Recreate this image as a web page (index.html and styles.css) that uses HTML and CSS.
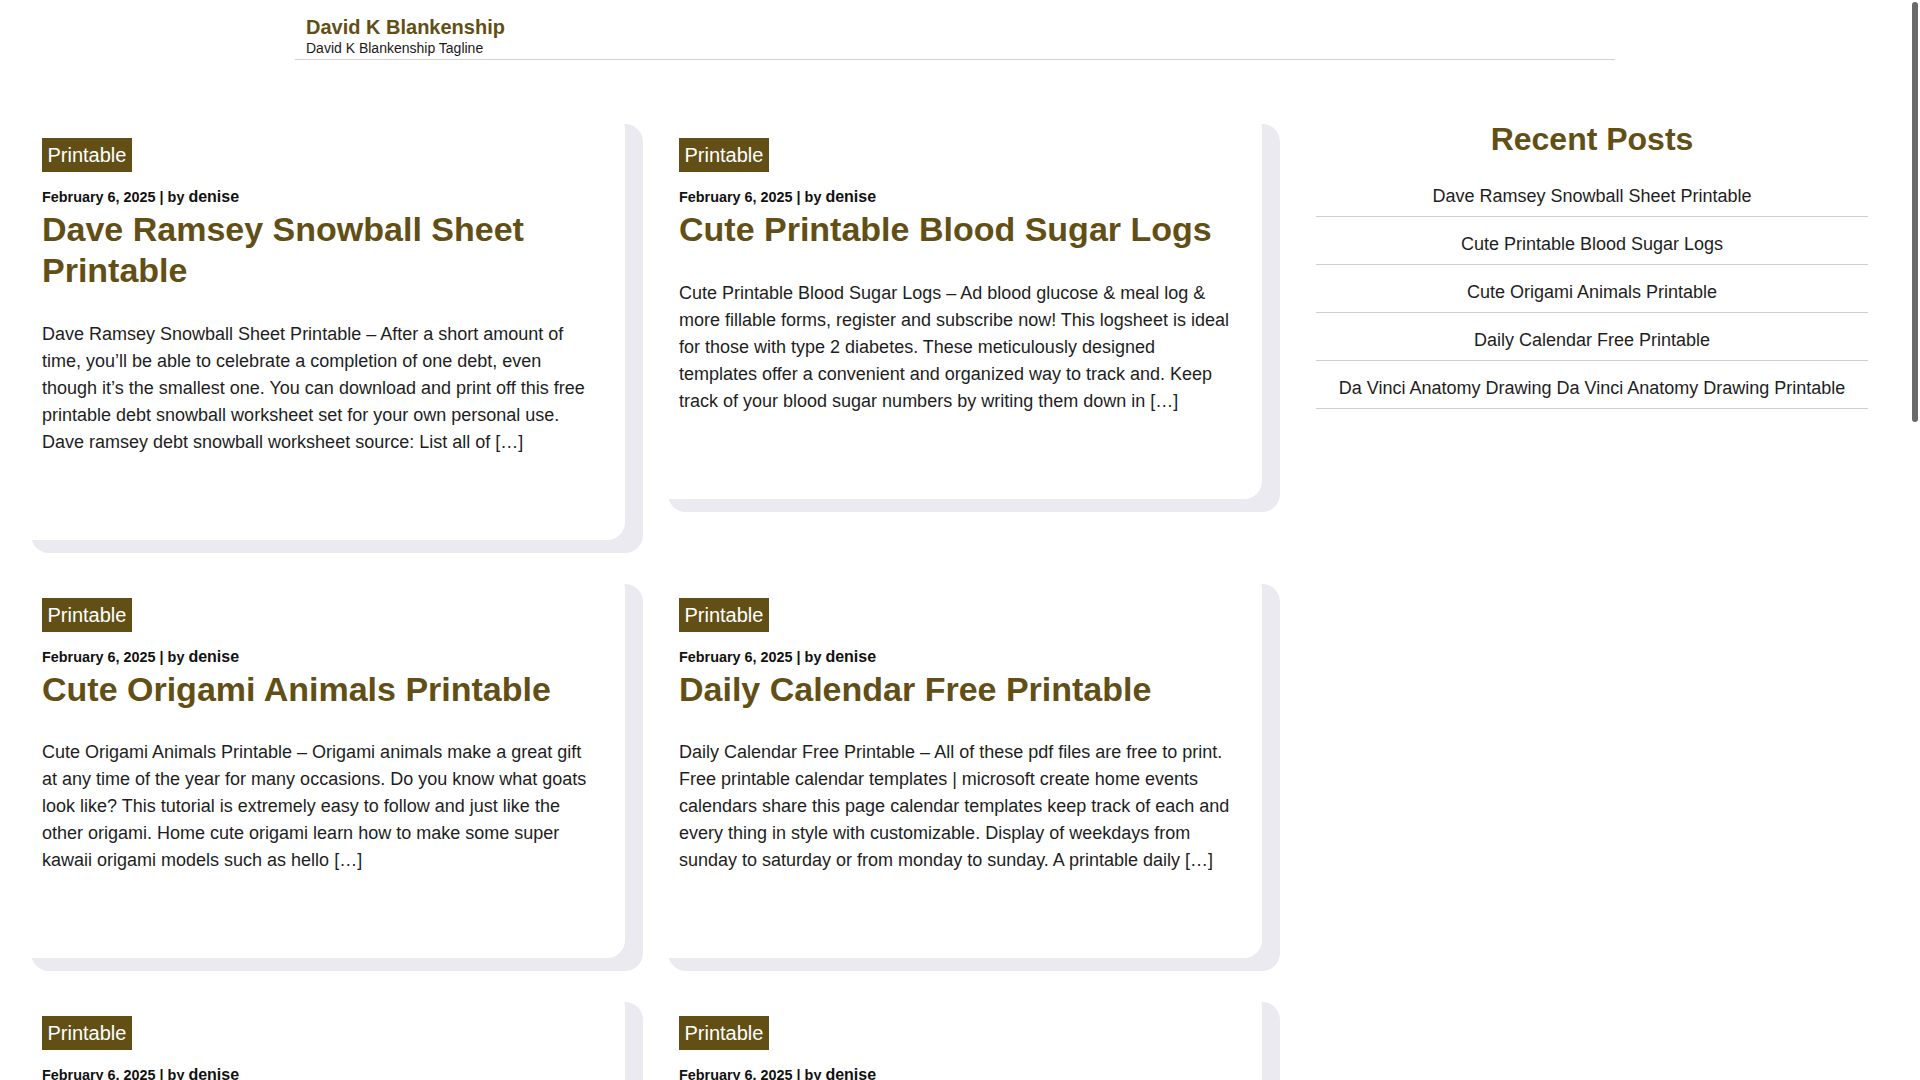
FILE: index.html
```html
<!DOCTYPE html>
<html lang="en">
<head>
<meta charset="utf-8">
<title>David K Blankenship</title>
<link rel="stylesheet" href="styles.css">
</head>
<body>
<div class="scroll-thumb"></div>
<header class="site-header">
  <div class="site-title">David K Blankenship</div>
  <div class="site-tagline">David K Blankenship Tagline</div>
</header>

<div class="layout">
  <main class="posts">
    <article class="card">
      <div><span class="badge">Printable</span></div>
      <div class="meta">February 6, 2025 | by <span class="author">denise</span></div>
      <h2 class="post-title">Dave Ramsey Snowball Sheet Printable</h2>
      <p class="excerpt">Dave Ramsey Snowball Sheet Printable – After a short amount of time, you’ll be able to celebrate a completion of one debt, even though it’s the smallest one. You can download and print off this free printable debt snowball worksheet set for your own personal use. Dave ramsey debt snowball worksheet source: List all of […]</p>
    </article>
    <article class="card">
      <div><span class="badge">Printable</span></div>
      <div class="meta">February 6, 2025 | by <span class="author">denise</span></div>
      <h2 class="post-title">Cute Printable Blood Sugar Logs</h2>
      <p class="excerpt">Cute Printable Blood Sugar Logs – Ad blood glucose &amp; meal log &amp; more fillable forms, register and subscribe now! This logsheet is ideal for those with type 2 diabetes. These meticulously designed templates offer a convenient and organized way to track and. Keep track of your blood sugar numbers by writing them down in […]</p>
    </article>
    <article class="card">
      <div><span class="badge">Printable</span></div>
      <div class="meta">February 6, 2025 | by <span class="author">denise</span></div>
      <h2 class="post-title">Cute Origami Animals Printable</h2>
      <p class="excerpt">Cute Origami Animals Printable – Origami animals make a great gift at any time of the year for many occasions. Do you know what goats look like? This tutorial is extremely easy to follow and just like the other origami. Home cute origami learn how to make some super kawaii origami models such as hello […]</p>
    </article>
    <article class="card">
      <div><span class="badge">Printable</span></div>
      <div class="meta">February 6, 2025 | by <span class="author">denise</span></div>
      <h2 class="post-title">Daily Calendar Free Printable</h2>
      <p class="excerpt">Daily Calendar Free Printable – All of these pdf files are free to print. Free printable calendar templates | microsoft create home events calendars share this page calendar templates keep track of each and every thing in style with customizable. Display of weekdays from sunday to saturday or from monday to sunday. A printable daily […]</p>
    </article>
    <article class="card">
      <div><span class="badge">Printable</span></div>
      <div class="meta">February 6, 2025 | by <span class="author">denise</span></div>
      <h2 class="post-title">Da Vinci Anatomy Drawing Da Vinci Anatomy Drawing Printable</h2>
      <p class="excerpt">Da Vinci Anatomy Drawing Printable – Leonardo da Vinci made hundreds of anatomical drawings during his lifetime, studying muscles, bones and organs with great care. These printable sheets collect some of his most famous studies so you can print them at home and use them for practice, reference or simply to enjoy his remarkable […]</p>
    </article>
    <article class="card">
      <div><span class="badge">Printable</span></div>
      <div class="meta">February 6, 2025 | by <span class="author">denise</span></div>
      <h2 class="post-title">Free Printable Coloring Pages</h2>
      <p class="excerpt">Free Printable Coloring Pages – Coloring is a relaxing activity for kids and adults alike. Here you will find a collection of free pages that you can download and print in a few seconds. Choose from animals, flowers, holidays and many more themes, then grab your crayons and start coloring right away at home or in the classroom […]</p>
    </article>
    <article class="card">
      <div><span class="badge">Printable</span></div>
      <div class="meta">February 5, 2025 | by <span class="author">denise</span></div>
      <h2 class="post-title">Printable Weekly Meal Planner</h2>
      <p class="excerpt">Printable Weekly Meal Planner – Planning your meals ahead saves time and money during a busy week. This simple printable lets you write down breakfast, lunch and dinner for every day, along with a shopping list on the side. Print as many copies as you need and keep them on the fridge to stay organized all week […]</p>
    </article>
    <article class="card">
      <div><span class="badge">Printable</span></div>
      <div class="meta">February 5, 2025 | by <span class="author">denise</span></div>
      <h2 class="post-title">Free Printable Budget Worksheet</h2>
      <p class="excerpt">Free Printable Budget Worksheet – Keeping track of income and expenses is the first step toward better money habits. Use this free worksheet to list your monthly bills, savings goals and spending categories. It is easy to fill in by hand and works well for families, students and anyone who wants a clear view of their […]</p>
    </article>
  </main>

  <aside class="sidebar">
    <h2 class="widget-title">Recent Posts</h2>
    <ul class="recent">
      <li>Dave Ramsey Snowball Sheet Printable</li>
      <li>Cute Printable Blood Sugar Logs</li>
      <li>Cute Origami Animals Printable</li>
      <li>Daily Calendar Free Printable</li>
      <li>Da Vinci Anatomy Drawing Da Vinci Anatomy Drawing Printable</li>
    </ul>
  </aside>
</div>

<footer class="site-footer">
  <div class="pager"><span class="current">1</span><span>2</span><span>3</span><span>Next »</span></div>
  <div class="copy">© 2025 David K Blankenship</div>
</footer>
</body>
</html>
```

FILE: styles.css
```css
html, body {
  margin: 0;
  padding: 0;
  background: #ffffff;
}

body {
  font-family: "Liberation Sans", Arial, sans-serif;
  color: #1e1e1e;
  padding-right: 10px;
}

.scroll-thumb {
  position: fixed;
  top: 2px;
  right: 2px;
  width: 6px;
  height: 420px;
  border-radius: 3px;
  background: #6a6a6a;
  z-index: 10;
}

.site-header {
  width: 1320px;
  margin: 0 auto;
  box-sizing: border-box;
  padding: 15px 11px 2px;
  border-bottom: 1px solid #d2d2d2;
}

.site-title {
  font-size: 20px;
  line-height: 24px;
  font-weight: bold;
  color: #624f15;
}

.site-tagline {
  margin-top: 1px;
  font-size: 14px;
  line-height: 17px;
  color: #1a1a1a;
}

.layout {
  display: flex;
  align-items: flex-start;
  padding: 51px 0 0 13px;
  gap: 54px;
}

.posts {
  display: grid;
  grid-template-columns: 612px 612px;
  column-gap: 25px;
  row-gap: 31px;
  align-items: start;
}

.card {
  background: #ffffff;
  border-radius: 18px;
  box-shadow: 18px 13px 0 0 #ebeaf0;
  padding: 27px 29px 84px;
}

.badge {
  display: inline-block;
  background: #624f15;
  color: #ffffff;
  font-size: 20px;
  line-height: 24px;
  padding: 5px 5.5px;
}

.meta {
  margin-top: 15px;
  font-size: 14.4px;
  line-height: 20px;
  font-weight: bold;
  color: #111111;
}

.author {
  font-size: 16px;
}

.post-title {
  margin: 2px 0 30px;
  font-size: 34px;
  line-height: 1.2;
  font-weight: bold;
  color: #624f15;
}

.excerpt {
  margin: 0;
  font-size: 18px;
  line-height: 27px;
  color: #1e1e1e;
}

.sidebar {
  width: 552px;
  padding-top: 1px;
}

.widget-title {
  margin: 8px 0 11px;
  font-size: 32px;
  line-height: 1.2;
  text-align: center;
  color: #624f15;
}

.recent {
  list-style: none;
  margin: 0;
  padding: 0;
}

.recent li {
  padding: 14px 0 6px;
  font-size: 18px;
  line-height: 27px;
  text-align: center;
  color: #1e1e1e;
  border-bottom: 1px solid #cfcfcf;
}

.site-footer {
  padding: 60px 0 60px;
  text-align: center;
  font-size: 16px;
}

.pager {
  display: flex;
  justify-content: center;
  gap: 10px;
  margin-bottom: 30px;
}

.pager span {
  padding: 6px 12px;
  border: 1px solid #d2d2d2;
  color: #624f15;
}

.pager .current {
  background: #624f15;
  color: #ffffff;
}

.copy {
  color: #555555;
}
```
